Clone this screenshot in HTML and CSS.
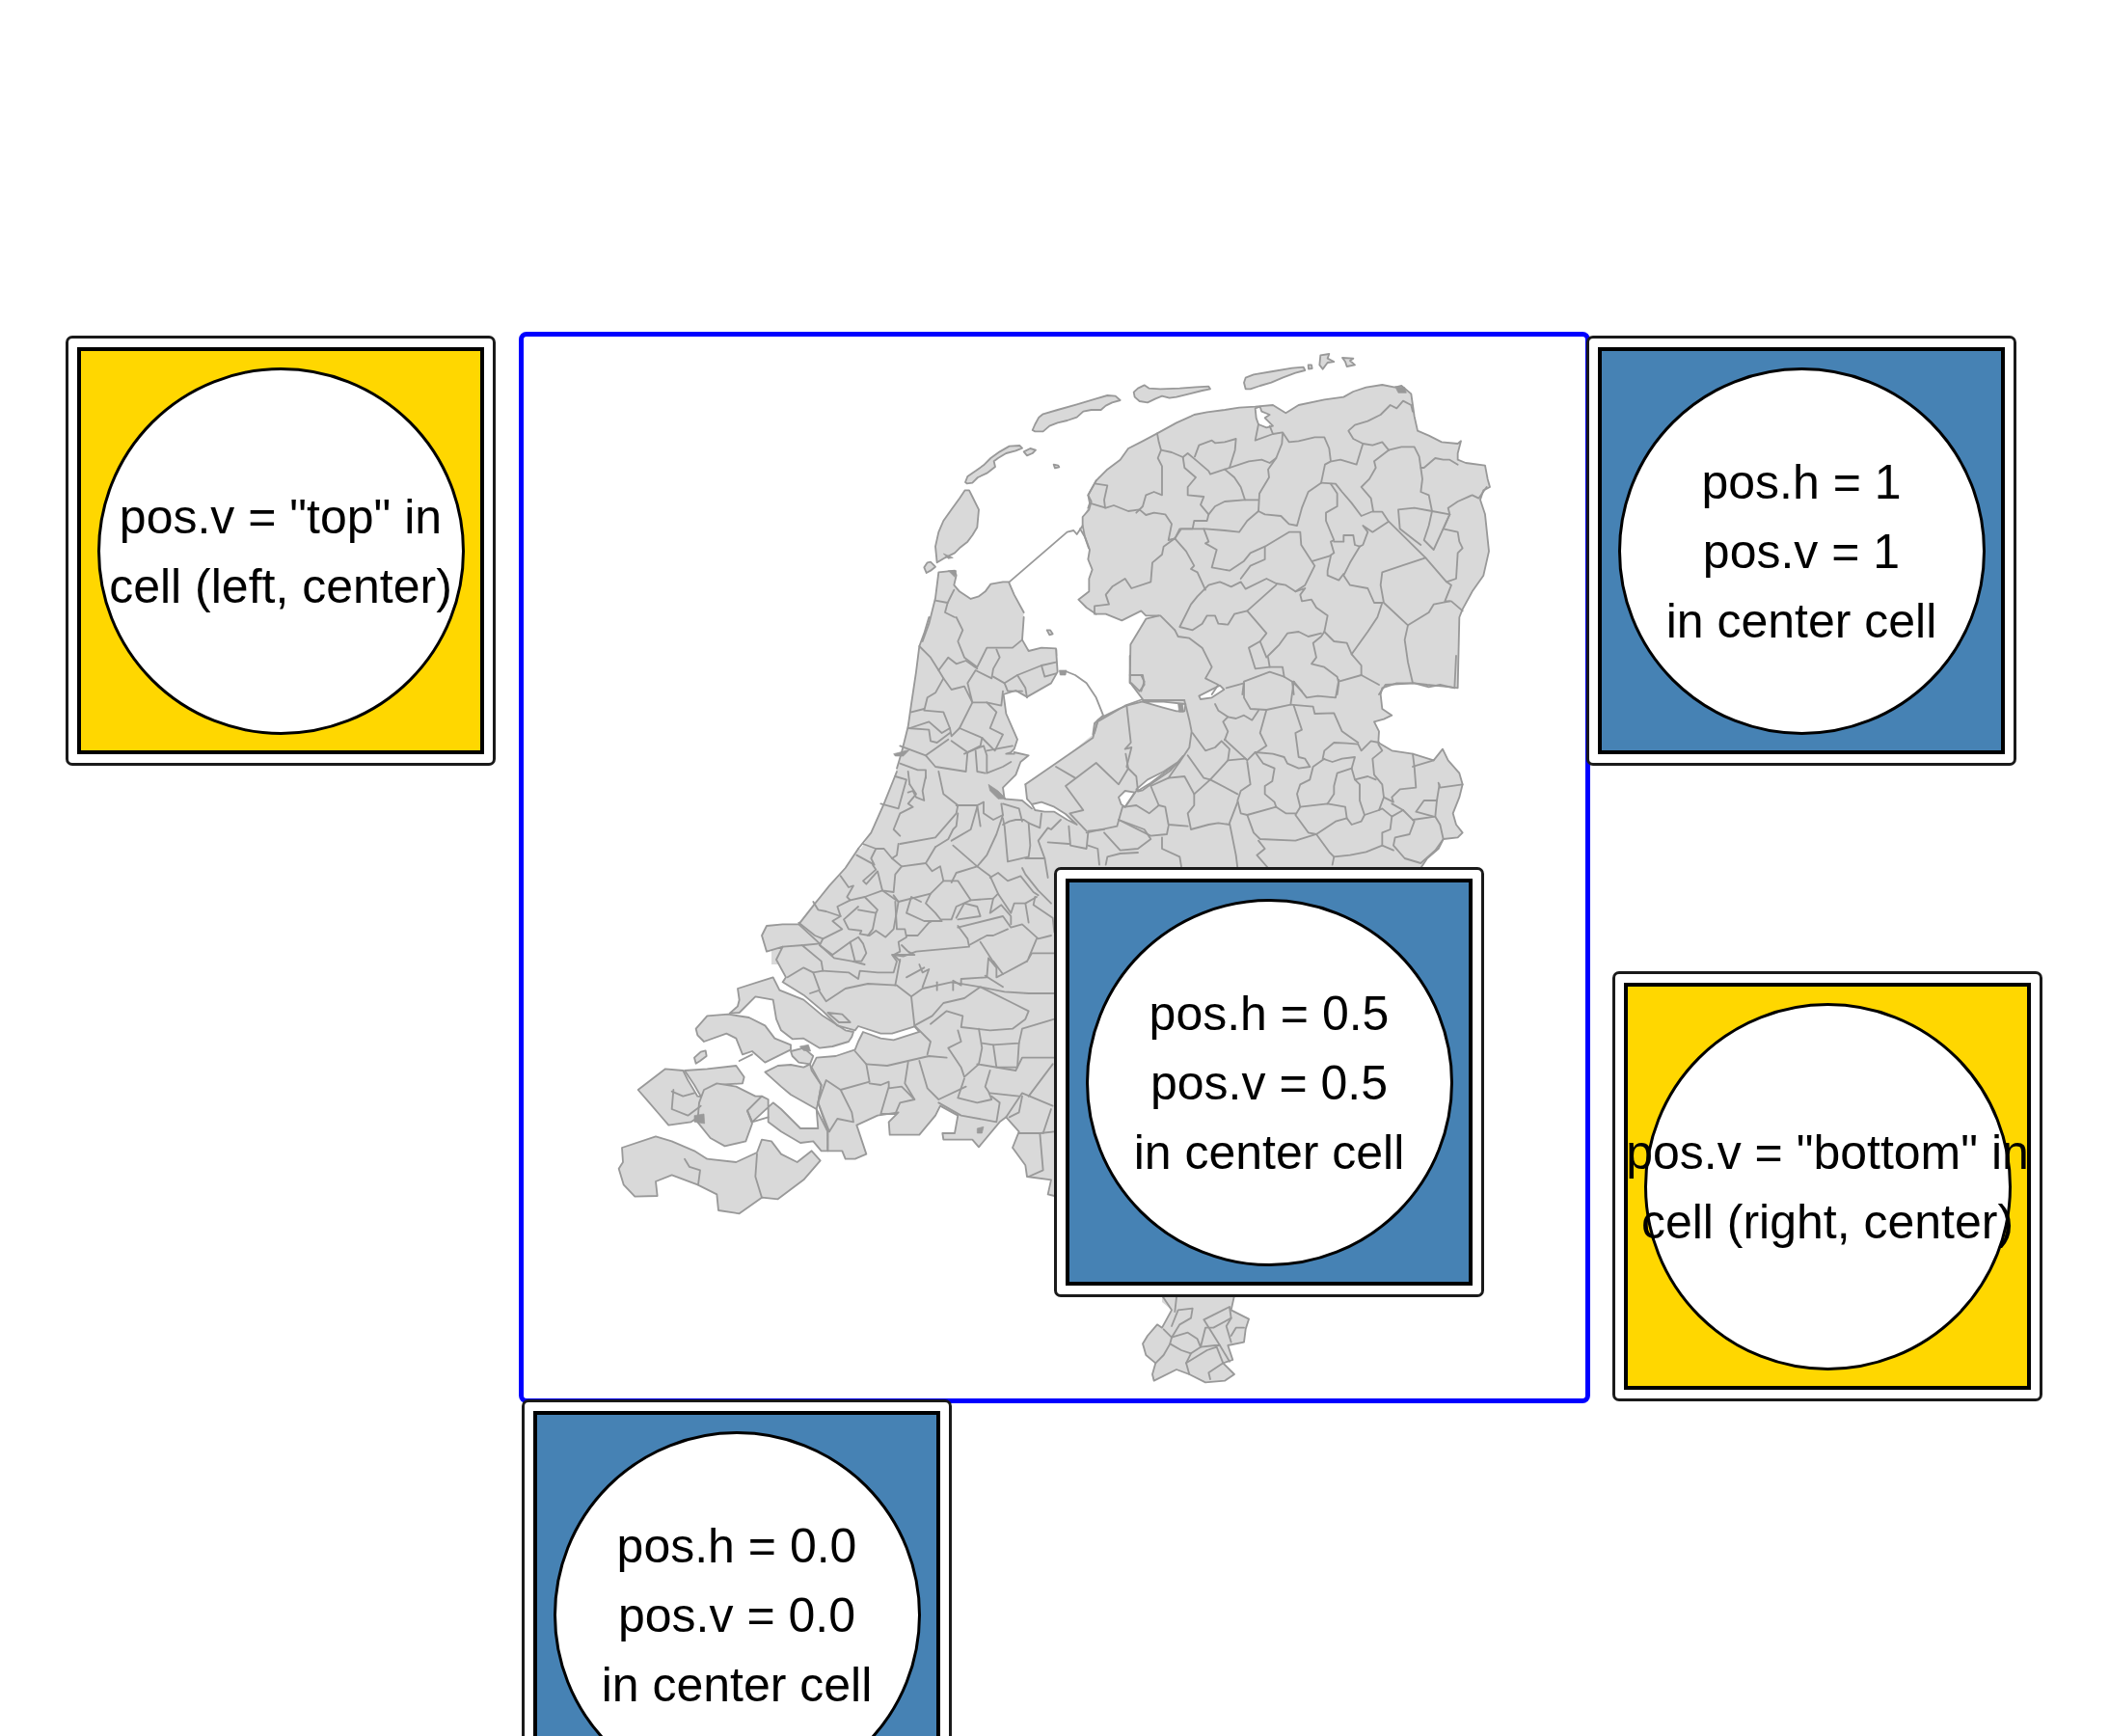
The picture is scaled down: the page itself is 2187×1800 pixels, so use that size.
FILE: index.html
```html
<!DOCTYPE html>
<html lang="en">
<head>
<meta charset="utf-8">
<title>Inset positions</title>
<link rel="stylesheet" href="styles.css">
</head>
<body>
<div class="canvas">
  <div class="frame">
    <svg class="map" viewBox="543 349 1101 1101" xmlns="http://www.w3.org/2000/svg">
      <!-- land fills -->
      <g class="land">
        <g transform="translate(940 360) scale(.33333)">
          <polygon points="100,700 150,695 155,710 148,740 165,760 200,783 225,775 245,760 262,737 300,730 318,730 335,770 365,825 362,915 375,935 395,952 415,938 470,940 470,960 38,960 50,915 70,860 90,780"/>
          <polygon points="548,555 555,590 570,630 565,660 578,692 568,720 568,760 535,785 560,810 590,830 600,830 600,400 590,415 565,460 575,480 568,505 548,528"/>
        </g>
        <g transform="translate(1120 370) scale(.33333)">
          <polygon points="10,500 30,455 25,430 50,385 85,350 125,320 150,285 195,262 240,238 300,205 345,185 355,180 395,172 450,165 495,158 545,155 600,150 640,175 680,150 760,133 820,125 850,108 890,95 940,87 980,95 1000,90 1030,115 1035,150 1040,185 1050,230 1085,245 1125,265 1175,270 1185,262 1175,300 1175,320 1200,330 1260,338 1268,380 1275,405 1255,415 1245,445 1260,490 1272,605 1255,680 1220,730 1190,785 1180,810 1175,1030 1130,1025 1080,1020 1040,1015 950,1020 930,1050 200,1050 190,1045 155,1015 157,895 205,815 245,805 205,805 190,790 130,820 80,800 50,800 20,780 -5,755 28,730 28,690 38,662 25,630 30,600 15,560 8,525"/>
        </g>
        <g transform="translate(1090 680) scale(.33333)">
          <polygon points="245,0 1260,0 1255,100 1210,90 1175,97 1130,85 1075,85 1030,100 1025,120 1030,165 1060,185 1035,197 1005,205 1020,235 1018,270 1060,295 1125,305 1190,325 1218,290 1235,325 1270,365 1280,400 1270,440 1250,490 1260,525 1280,550 1265,565 1220,570 1205,600 1170,630 1150,660 0,660 0,350 130,245 135,210 230,155 285,140 245,82"/>
        </g>
        <g transform="translate(920 640) scale(.33333)">
          <polygon points="130,0 425,0 420,70 440,105 480,95 525,97 530,170 510,205 435,248 400,228 362,240 370,300 405,380 395,410 385,420 370,425 395,425 395,420 440,430 415,450 400,490 360,530 365,565 420,570 450,595 490,605 540,612 590,650 625,670 720,645 700,900 0,900 0,570 30,470 45,420 65,340 75,270 90,170 100,90 115,50"/>
          <polygon points="430,520 640,375 655,320 670,310 720,285 745,275 795,262 920,290 945,350 925,425 880,480 780,525 730,600 715,645 630,670 590,640 560,620 490,580 450,580 435,565"/>
        </g>
        <g transform="translate(800 800) scale(.33333)">
          <polygon points="390,0 740,0 720,55 725,85 760,90 810,115 900,130 900,600 0,600 0,480 30,475 70,490 135,405 215,325 265,260 310,190 350,100"/>
        </g>
        <g transform="translate(620 880) scale(.33333)">
          <polygon points="810,0 1420,0 1420,1080 1400,1075 1410,1030 1335,1020 1330,985 1290,930 1310,880 1270,835 1250,850 1185,928 1165,905 1075,905 1072,885 1110,885 1120,830 1065,800 1050,830 1000,890 908,890 905,850 935,820 870,830 805,860 835,950 800,965 770,965 760,940 715,940 715,880 685,790 695,735 665,680 680,650 740,645 800,625 810,600 825,570 880,590 920,595 1000,570 985,553 915,575 880,575 810,552 800,565 745,550 700,505 640,455 575,415 585,400 555,345 575,305 525,320 510,270 525,240 575,235 625,235 680,165 720,115 770,60"/>
        </g>
        <g transform="translate(1170 1335) scale(.33333)">
          <polygon points="105,25 330,25 320,70 375,98 365,130 360,170 310,180 325,225 295,235 330,270 300,290 240,295 190,270 150,255 80,290 75,270 85,235 55,210 45,175 60,150 90,115 105,125 135,70 105,45"/>
        </g>
      </g>

      <!-- lakes and river arms on the land fill -->
      <g class="water">
        <g transform="translate(1090 680) scale(.33333)">
          <polygon points="285,143 345,160 390,172 415,172 418,150 350,143"/>
          <polygon points="460,125 525,92 538,105 500,130 465,135"/>
          <polygon points="265,415 300,385 350,360 395,330 410,312 370,358 320,392 285,418 270,422"/>
          <polygon points="210,440 230,420 260,425 230,470 218,462"/>
        </g>
        <g transform="translate(920 640) scale(.33333)">
          <polygon points="450,582 480,575 520,590 555,612 590,645 560,630 520,605 490,605 460,600"/>
        </g>
        <g transform="translate(1120 370) scale(.33333)">
          <polygon points="545,160 560,155 565,170 590,180 575,190 600,215 580,220 555,210 548,190"/>
        </g>
      </g>

      <!-- islands -->
      <g class="isle">
        <g transform="translate(940 360) scale(.33333)">
          <polygon points="183,420 190,402 215,385 240,367 262,345 290,325 320,308 352,306 360,314 340,322 310,330 285,345 272,355 276,372 250,392 222,405 205,422 188,424"/>
          <polygon points="392,258 400,240 412,218 425,208 470,195 530,178 590,160 625,150 650,152 665,165 640,172 620,182 605,195 575,195 550,200 530,218 500,228 470,235 445,245 425,262 400,262"/>
          <polygon points="365,325 385,315 402,320 392,330 375,337"/>
          <polygon points="458,365 472,368 475,373 462,376"/>
          <polygon points="707,140 720,128 740,118 755,128 790,130 850,128 900,124 940,122 945,130 920,135 880,145 840,155 818,158 795,152 775,160 750,172 725,168 710,155"/>
          <polygon points="95,670 90,620 100,575 115,540 140,505 165,470 182,445 195,445 205,465 225,505 220,560 205,585 190,605 165,625 150,640 120,655"/>
          <polygon points="55,685 65,670 75,668 90,683 75,695 62,702"/>
          <polygon points="437,880 447,880 455,892 445,895"/>
        </g>
        <g transform="translate(1120 370) scale(.33333)">
          <polygon points="510,80 515,65 540,55 600,45 660,35 695,32 700,42 670,50 630,65 595,80 560,90 530,100 515,100"/>
          <polygon points="748,-5 775,-9 770,5 790,15 770,18 755,38 745,25"/>
          <polygon points="816,3 850,5 840,12 855,25 830,30 825,15"/>
          <polygon points="710,25 720,25 722,36 711,38"/>
        </g>
        <g transform="translate(620 880) scale(.33333)">
          <polygon points="435,435 545,400 565,440 640,470 700,520 770,565 795,570 790,585 780,600 730,615 690,620 640,590 605,592 570,565 555,530 545,470 490,460 440,510 410,512 435,490 440,470"/>
          <polygon points="305,560 340,520 405,515 470,525 520,550 550,590 600,610 600,625 520,665 480,630 450,640 430,590 400,575 330,600 310,580"/>
          <polygon points="600,630 640,620 670,645 660,670 625,665 605,645"/>
          <polygon points="520,695 560,675 600,672 640,680 660,670 665,690 695,735 685,790 680,810 600,765 570,740"/>
          <polygon points="270,690 340,685 430,675 455,710 450,730 370,735 320,770 300,735"/>
          <polygon points="125,750 210,685 265,690 280,720 310,770 345,775 320,790 320,830 290,850 220,860 190,825 160,790"/>
          <polygon points="315,790 330,750 370,730 430,740 490,770 510,770 465,815 480,855 460,910 395,925 350,900 310,850"/>
          <polygon points="465,815 510,770 530,780 530,850 570,880 630,915 670,910 695,940 715,940 715,880 680,810 685,870 630,870 570,810 545,790 480,850"/>
          <polygon points="75,930 180,895 230,910 300,940 340,965 430,975 495,945 510,905 540,910 570,950 620,975 665,940 692,970 640,1030 560,1090 510,1085 440,1135 375,1125 370,1075 310,1045 230,1015 180,1035 185,1080 115,1082 80,1045 65,995 78,975"/>
          <polygon points="715,510 760,515 785,540 750,540"/>
          <polygon points="300,650 320,632 335,628 338,645 318,660 305,668"/>
        </g>
      </g>

      <!-- coasts and municipal borders -->
      <g class="edges">
        <g transform="translate(940 360) scale(.33333)">
          <polyline points="50,915 70,860 90,780 100,700 150,695 155,710 148,740 165,760 200,783 225,775 245,760 262,737 300,730 318,730 335,770 365,825"/>
          <polyline points="320,730 500,575 520,570 530,582 548,555 555,590 570,630 565,660 578,692 568,720 568,760 535,785 560,810 590,830"/>
          <polyline points="548,555 548,528 568,505 575,480 565,460 590,415"/>
          <polyline points="540,565 555,590 567,625"/>
          <polyline points="90,788 128,795 120,825 150,840"/>
          <polyline points="128,795 148,755"/>
        </g>
        <g transform="translate(1120 370) scale(.33333)">
          <polyline points="25,470 30,455 25,430 50,385 85,350 125,320 150,285 195,262 240,238 300,205 345,185 355,180 395,172 450,165 495,158 545,155 600,150 640,175 680,150 760,133 820,125 850,108 890,95 940,87 980,95 1000,90 1030,115 1035,150 1040,185 1050,230 1085,245 1125,265 1175,270 1185,262 1175,300 1175,320 1200,330 1260,338 1268,380 1275,405 1255,415 1245,445 1260,490 1272,605 1255,680 1220,730 1190,785 1180,810 1175,1030 1130,1025 1080,1020 1040,1015 950,1020 930,1050"/>
          <polyline points="50,800 80,800 130,820 190,790 205,805 250,805 295,850"/>
          <polyline points="155,1015 157,895 205,815 245,805"/>
          <polyline points="240,238 245,265 252,290 242,315 255,340 255,410 255,430 230,420 205,430 195,465 175,485"/>
          <polyline points="252,290 285,297 320,312 325,345 360,375 335,405 335,430 385,435 375,460 400,490 395,510 355,510 350,535 310,535 295,565"/>
          <polyline points="320,312 335,300 365,325 400,355 405,365 450,350 480,375 500,405 513,445"/>
          <polyline points="357,310 370,275 410,260 420,268 450,265 485,255 482,290 465,345"/>
          <polyline points="450,350 525,325 565,320 590,330 610,315"/>
          <polyline points="630,240 628,270 610,315 585,350 588,375 558,425 555,480"/>
          <polyline points="555,445 510,445 450,450 420,465 400,490"/>
          <polyline points="555,480 575,490 625,495 650,520 675,525 690,470 710,420 750,392"/>
          <polyline points="750,392 762,335 780,325 775,285 760,250 730,250 680,262 650,265 630,235 600,240 590,215"/>
          <polyline points="600,240 545,260 555,210"/>
          <polyline points="782,325 810,320 860,335 880,270 910,275 940,265 960,290"/>
          <polyline points="880,270 850,255 835,230 855,212 895,200 935,180 965,150 985,160 1005,137 1030,150 1035,170"/>
          <polyline points="960,290 1000,280 1040,280 1055,310 1060,345 1070,345 1105,315 1130,320 1150,320 1175,335"/>
          <polyline points="1060,345 1065,380 1060,420 1085,430 1095,480 1150,490 1130,535"/>
          <polyline points="960,290 915,325 920,345 900,380 875,405 905,440 912,480 875,495 845,455 815,420 795,395 750,392"/>
          <polyline points="912,482 940,482 960,512 1075,625 1140,700 1155,710 1135,760 1155,760 1190,790"/>
          <polyline points="960,512 910,545 880,525 895,545 880,585 870,590 840,640 820,680 840,710 895,720 915,765 940,765"/>
          <polyline points="1095,480 1040,470 990,475 995,535 1040,570 1060,585"/>
          <polyline points="1095,480 1085,525 1070,570 1100,600 1150,490"/>
          <polyline points="1150,490 1145,470 1175,450 1220,430 1240,440 1265,405"/>
          <polyline points="1130,535 1175,545 1180,575 1190,595 1175,610 1170,690 1140,700"/>
          <polyline points="1075,625 1000,650 940,670 935,710 945,765 1020,835 1085,795 1100,770 1150,760"/>
          <polyline points="1020,835 1010,880 1020,950 1035,1015"/>
          <polyline points="940,765 925,810 895,855 845,925 875,960 875,990"/>
          <polyline points="845,925 830,890 790,885 760,855 750,870 725,890 735,935 720,955 760,965 800,995 805,1015 800,1050"/>
          <polyline points="875,990 805,1010"/>
          <polyline points="875,990 930,1020"/>
          <polyline points="760,855 770,805 735,780 720,755 690,760 685,740 700,720 670,730 640,710 610,705 580,690 515,722 500,700 470,715 435,700 400,710 365,745 345,770 310,840 350,850 380,830 395,805 420,805 430,830 460,833 480,800 520,790 610,710"/>
          <polyline points="520,790 580,860 560,885 525,905 545,970 590,965 630,965 635,995"/>
          <polyline points="560,885 580,935 600,915 620,895 645,860 680,855 710,870 750,860"/>
          <polyline points="590,965 585,935"/>
          <polyline points="295,565 330,605 355,650 345,660 365,670 390,725"/>
          <polyline points="295,565 260,590 255,615 225,640 220,700 160,720 140,690 100,715 80,740 90,770 45,775 45,800"/>
          <polyline points="295,565 275,570 285,520 265,490 230,485 205,492 185,475 150,480 105,462 80,470 30,455"/>
          <polyline points="50,395 85,400 75,445 78,470"/>
          <polyline points="295,565 315,535 390,535 450,540 495,545 520,510 555,480"/>
          <polyline points="385,535 400,575 390,580 425,600 410,655 465,665 510,635 530,610 575,590 650,545 685,545 688,585 730,650 700,710 670,730"/>
          <polyline points="575,590 575,630 530,650 500,690"/>
          <polyline points="725,635 775,620 790,610 780,575 790,570 765,510 765,485 800,465 800,425 780,395"/>
          <polyline points="780,620 770,665 770,680 805,695 820,675"/>
          <polyline points="790,575 820,575 820,555 850,555 855,585 870,590"/>
          <polyline points="295,850 305,870 340,875 380,905 410,965 390,1000 430,1020 410,1050"/>
          <polyline points="155,990 190,990 200,1010 190,1040"/>
          <polyline points="635,995 590,980 510,1010 505,1050"/>
          <polyline points="635,995 660,1010 690,1040"/>
          <polyline points="660,1010 665,1050"/>
        </g>
        <g transform="translate(1090 680) scale(.33333)">
          <polyline points="1260,0 1255,100 1210,90 1175,97 1130,85 1075,85 1030,100 1025,120 1030,165 1060,185 1035,197 1005,205 1020,235 1018,270 1060,295 1125,305 1190,325 1218,290 1235,325 1270,365 1280,400 1270,440 1250,490 1260,525 1280,550 1265,565 1220,570 1205,600 1170,630 1150,660"/>
          <polyline points="245,0 245,82 285,135 230,155 145,205 135,240"/>
          <polyline points="45,48 75,60 110,85 140,130 162,185 135,210 130,245"/>
          <polyline points="285,138 415,138"/>
          <polyline points="415,140 430,200 437,235 430,285 400,330 350,365 310,395 270,420 265,375 235,345 250,285 230,290 248,270 235,155"/>
          <polyline points="232,305 240,350 210,400 140,333 45,405 100,480 58,490 110,545"/>
          <polyline points="15,345 75,380"/>
          <polyline points="265,420 230,470 222,470 205,530 110,550"/>
          <polyline points="1020,270 995,265 965,295 955,275 920,272 880,270 850,295 845,320 875,330 905,320 945,315 935,350 890,365 880,405 880,430 860,460"/>
          <polyline points="1018,275 1030,295 1000,320 1005,370 1030,400 1035,440 1020,480 975,495 960,450 960,400 945,385 935,350"/>
          <polyline points="945,385 985,375 1010,385"/>
          <polyline points="1125,305 1130,345 1135,410 1085,415 1060,440 1065,455 1035,440"/>
          <polyline points="1190,325 1125,345"/>
          <polyline points="1280,400 1210,410 1205,395"/>
          <polyline points="1208,400 1200,450 1195,500 1125,510"/>
          <polyline points="1200,450 1160,450 1135,485 1190,500"/>
          <polyline points="1060,460 1095,480 1130,515 1115,555 1070,565 1065,590 1100,630 1150,645 1195,605 1220,570 1210,525 1195,500"/>
          <polyline points="1095,480 1060,500 1030,475 1020,480"/>
          <polyline points="1060,500 1055,540 1030,550 1030,590 1065,605"/>
          <polyline points="1030,590 980,610 930,620 880,625 875,650"/>
          <polyline points="825,555 865,610 880,625"/>
          <polyline points="825,555 885,515 920,505 935,525 965,515 975,495"/>
          <polyline points="825,555 800,550 760,495 775,470 860,460 915,470 920,505"/>
          <polyline points="775,470 765,430 775,400 805,385 815,345 850,320"/>
          <polyline points="805,345 770,350 735,335 725,315 690,305 635,300 610,325 605,320"/>
          <polyline points="635,300 660,335 695,350 688,390 665,405 665,430 695,455 700,470"/>
          <polyline points="700,470 730,490 760,490"/>
          <polyline points="700,470 610,495 590,490 580,450 590,420 620,400 610,330"/>
          <polyline points="610,495 630,550 650,570 760,575 825,555"/>
          <polyline points="645,575 665,600 640,620 675,660"/>
          <polyline points="580,455 555,520 575,620 580,660"/>
          <polyline points="580,430 495,385 550,325 605,320"/>
          <polyline points="495,385 445,430 415,375 365,380 400,330"/>
          <polyline points="425,310 475,380 495,385"/>
          <polyline points="445,430 445,465 425,490 435,540 490,525 520,520 555,525"/>
          <polyline points="365,380 310,405 335,465 305,490 265,465 230,470"/>
          <polyline points="335,465 355,470 365,525 425,530"/>
          <polyline points="440,240 480,295 510,285 530,265 555,290 550,325"/>
          <polyline points="540,260 605,320"/>
          <polyline points="510,150 520,170 550,190 535,205 550,235 540,262"/>
          <polyline points="600,85 600,130 620,165 670,168 745,152 755,80"/>
          <polyline points="545,100 600,85"/>
          <polyline points="745,152 815,158 820,180 880,178 905,235 955,270"/>
          <polyline points="755,155 780,230 760,240 770,315 790,320 805,345"/>
          <polyline points="670,168 650,240 670,280 640,300"/>
          <polyline points="550,190 575,195 600,185 625,200 645,170"/>
          <polyline points="755,80 795,130 830,125 885,130 895,75"/>
          <polyline points="210,510 310,560 360,555 365,530"/>
          <polyline points="165,550 215,605 270,600 310,570 290,540 210,510"/>
          <polyline points="115,545 165,540"/>
          <polyline points="115,550 110,600 60,590 55,530"/>
          <polyline points="115,590 145,600 150,650"/>
          <polyline points="170,650 175,625 215,615 270,612"/>
          <polyline points="345,565 345,600 400,625 405,655"/>
        </g>
        <g transform="translate(920 640) scale(.33333)">
          <polyline points="30,470 45,420 65,340 75,270 90,170 100,90 115,50 130,0"/>
          <polyline points="425,0 420,70 440,105 480,95 525,97 530,170 510,205 435,248 400,228 362,240 370,300 405,380 395,410 385,420 370,425 395,425 395,420 440,430 415,450 400,490 360,530 365,565 420,570 450,595"/>
          <polyline points="430,520 640,375 655,320 670,310 720,285 745,275 795,262"/>
          <polyline points="430,520 435,565 450,582"/>
          <polyline points="100,90 135,125 160,165 190,125 215,145 245,135 280,160"/>
          <polyline points="215,0 235,40 220,75 240,125 280,155 310,95 390,95 420,70"/>
          <polyline points="160,165 175,190 150,235 125,250 115,290 175,295 195,345 170,360 130,325 70,345"/>
          <polyline points="175,190 200,225 240,215 265,265 250,205 275,165 325,190 330,160 350,125 340,100"/>
          <polyline points="330,185 365,205 405,180 430,220 435,250"/>
          <polyline points="405,180 480,150 490,185 525,175"/>
          <polyline points="480,150 525,140"/>
          <polyline points="365,205 375,230 420,230"/>
          <polyline points="360,230 355,275 310,265 265,265 225,345 200,370 195,345"/>
          <polyline points="310,265 340,295 320,345 360,365 335,415 295,375 225,345"/>
          <polyline points="295,375 290,400 250,420 200,385"/>
          <polyline points="250,420 245,480 150,465 120,430 190,380"/>
          <polyline points="120,430 40,400"/>
          <polyline points="65,345 130,350 135,385 155,390 195,360"/>
          <polyline points="75,295 115,285"/>
          <polyline points="40,455 95,475 120,475 120,500"/>
          <polyline points="240,425 275,410 300,400 310,430 310,485 360,465 385,450"/>
          <polyline points="275,415 280,480 305,485"/>
          <polyline points="310,415 390,400"/>
          <polyline points="500,700 565,705"/>
          <polyline points="760,180 795,180 800,210 785,230 760,205"/>
        </g>
        <g transform="translate(800 800) scale(.33333)">
          <polyline points="390,0 350,100 310,190 270,240"/>
          <polyline points="340,100 395,115 420,25 385,15"/>
          <polyline points="430,40 450,70 425,100 440,110 400,130 380,180 400,200"/>
          <polyline points="425,0 430,40"/>
          <polyline points="480,15 470,60 475,90 450,80 440,60 425,65"/>
          <polyline points="520,0 535,70 580,105 575,130 510,205 400,225"/>
          <polyline points="575,105 640,105 660,95"/>
          <polyline points="580,130 575,170 565,180 550,210 510,235"/>
          <polyline points="640,110 620,180 560,215"/>
          <polyline points="395,225 390,260 375,270 350,240 325,240 285,225"/>
          <polyline points="325,240 310,270 320,290 265,260"/>
          <polyline points="375,270 405,295 480,285 510,235"/>
          <polyline points="480,285 500,310 525,295 535,340 495,380 395,405 380,385"/>
          <polyline points="405,295 385,320 380,375 345,370 330,310 295,350 285,340 325,305 315,290"/>
          <polyline points="215,325 240,360 255,355 235,390 245,400 205,420 215,450 170,435 145,430 130,405"/>
          <polyline points="245,400 290,390 345,370 395,405 380,490 355,515 325,495 305,510 275,505 280,495 240,490 225,460 270,420"/>
          <polyline points="325,440 330,430 290,390"/>
          <polyline points="270,430 325,440 315,490 300,510"/>
          <polyline points="85,470 135,510 160,520 220,490 190,465 215,450"/>
          <polyline points="160,520 150,540 190,570 245,530 270,515 285,535 295,565 280,590 255,590"/>
          <polyline points="245,530 260,590"/>
          <polyline points="150,540 195,580 250,590 290,600"/>
          <polyline points="385,405 390,490 415,490 420,515 395,530 400,560 380,570 400,590"/>
          <polyline points="420,510 455,510 490,470 500,465"/>
          <polyline points="495,380 480,410 510,440 530,465 475,465 420,440 435,390 465,405"/>
          <polyline points="530,460 560,460 575,420 620,400 580,340 535,340"/>
          <polyline points="620,400 690,395 705,380 680,325 640,295 575,315 560,345"/>
          <polyline points="640,295 565,230"/>
          <polyline points="640,295 670,260 700,195 720,135 715,100"/>
          <polyline points="680,330 705,315 735,340 775,325 815,375 830,385"/>
          <polyline points="705,380 745,440 755,410 790,410 825,390"/>
          <polyline points="690,395 680,440 715,415 745,450 745,475"/>
          <polyline points="580,485 720,450 745,485 780,475 830,520 870,510"/>
          <polyline points="580,480 610,520 615,545 450,560 410,575 380,570"/>
          <polyline points="615,540 670,510 690,510 735,490"/>
          <polyline points="575,455 600,410 640,420 650,450 580,460"/>
          <polyline points="650,530 695,600"/>
          <polyline points="800,580 825,520"/>
          <polyline points="790,410 800,470"/>
          <polyline points="820,390 815,415 875,455 880,500"/>
          <polyline points="720,145 725,170 735,280 800,265 805,230 800,160 785,150 760,150 740,155 720,165"/>
          <polyline points="790,270 850,270 860,330"/>
          <polyline points="780,300 790,320 830,370 870,410"/>
          <polyline points="850,270 830,215 860,175 870,180 900,150"/>
          <polyline points="800,160 835,175 840,130"/>
          <polyline points="720,100 770,115 780,155"/>
          <polyline points="660,95 660,130 690,150 720,135"/>
          <polyline points="640,105 650,170"/>
        </g>
        <g transform="translate(620 880) scale(.33333)">
          <polyline points="810,0 770,60 720,115 680,165 625,235 575,235 525,240 510,270 525,320 575,305 555,345 585,400 575,415 640,455 700,505 745,550 800,565 810,552 880,575 915,575 985,553 1000,570 920,595 880,590 825,570 810,600 800,625 740,645 680,650 665,680 695,735 685,790 715,880 715,940 760,940 770,965 800,965 835,950 805,860 870,830 935,820 905,850 908,890 1000,890 1050,830 1065,800 1120,830 1110,885 1072,885 1075,905 1165,905 1185,928 1250,850 1270,835 1310,880 1290,930 1330,985 1335,1020 1410,1030 1400,1075 1420,1080"/>
          <polyline points="625,235 690,295 640,300 575,305"/>
          <polyline points="635,300 695,350 700,380 670,385 690,440 660,450"/>
          <polyline points="590,400 640,370 670,385"/>
          <polyline points="700,380 780,385 810,405 815,380 870,385 920,385 930,350 915,330 985,330 965,320 945,300"/>
          <polyline points="690,445 710,475 770,435 840,420 930,425 975,460 1010,435 1100,415 1190,430 1265,445 1340,450 1420,450"/>
          <polyline points="975,460 985,550 1035,600 1025,640"/>
          <polyline points="985,550 1040,520 1075,480 1140,465 1190,430 1290,480 1340,505 1330,530 1290,560 1220,565 1130,555 1135,520 1085,505 1035,545"/>
          <polyline points="1120,565 1130,600 1090,620 1130,680 1140,710 1185,670 1195,620 1185,560"/>
          <polyline points="1195,605 1230,610 1310,605 1320,560 1420,530"/>
          <polyline points="1230,610 1240,680 1305,680 1310,605"/>
          <polyline points="1180,670 1300,690 1320,650 1420,650"/>
          <polyline points="1140,715 1120,775 1180,790 1225,780 1215,755 1205,740 1220,690"/>
          <polyline points="800,630 835,670 845,725 755,750 710,720 685,790 720,880"/>
          <polyline points="835,670 900,675 965,660 1030,645 1085,650"/>
          <polyline points="965,665 955,730 985,780"/>
          <polyline points="1000,660 1025,745 1060,780 1145,740"/>
          <polyline points="845,730 880,735 905,725 905,745 945,740 985,780 940,790 925,825 880,825 905,740"/>
          <polyline points="755,750 790,820 795,850 745,840 720,880"/>
          <polyline points="1060,790 1130,830 1240,850 1250,790 1225,770"/>
          <polyline points="1270,835 1320,760 1415,800"/>
          <polyline points="1320,770 1310,820 1280,835"/>
          <polyline points="1310,885 1375,885 1420,880"/>
          <polyline points="1375,885 1385,1000 1340,1020"/>
          <polyline points="1340,770 1415,670"/>
          <polyline points="1220,760 1310,770"/>
          <polyline points="1385,885 1410,810"/>
          <polyline points="1230,350 1260,390 1335,350"/>
          <polyline points="1000,360 1010,385 1030,375 1010,430"/>
          <polyline points="940,345 925,425"/>
          <polyline points="1260,390 1240,400 1240,370 1215,340 1210,400 1130,405 1130,425 1105,410 1105,440"/>
          <polyline points="1055,415 1055,440"/>
          <polyline points="960,400 1015,370"/>
          <polyline points="1205,395 1260,430"/>
          <polyline points="1335,350 1350,325 1420,325"/>
          <polyline points="440,660 480,640"/>
          <polyline points="235,750 230,810 280,830 320,800"/>
          <polyline points="230,755 265,770 300,760"/>
          <polyline points="465,815 480,850 530,835"/>
          <polyline points="270,965 285,990 318,1000 312,1045"/>
          <polyline points="495,950 490,1020 510,1085"/>
        </g>
        <g transform="translate(1170 1335) scale(.33333)">
          <polyline points="105,25 135,70 105,125 90,115 60,150 45,175 55,210 85,235 75,270 80,290 150,255 190,270 240,295 300,290 330,270 295,235 325,225 310,180 360,170 365,130 375,98 320,70 330,25"/>
          <polyline points="135,120 155,70 200,65 195,95 160,115 135,155 110,130"/>
          <polyline points="135,155 185,140 215,160 225,185 240,125 265,125 320,95 315,60 265,85 235,100 285,180 315,230"/>
          <polyline points="135,155 130,175 165,195 195,205 225,185 270,180 285,180"/>
          <polyline points="130,175 110,210 85,235"/>
          <polyline points="195,205 180,235 190,270"/>
          <polyline points="180,235 245,195 275,185 295,235 250,265 255,285"/>
          <polyline points="320,95 305,120 320,170"/>
          <polyline points="360,125 335,125 320,150"/>
          <polyline points="150,30 145,75"/>
        </g>
      </g>

      <!-- dense urban clusters drawn solid -->
      <g class="blob">
        <g transform="translate(920 640) scale(.33333)">
          <polygon points="315,520 345,540 370,565 345,565 320,540"/>
          <polygon points="20,425 70,412 50,432 25,432"/>
          <polygon points="535,165 558,165 555,180 538,180"/>
          <polygon points="905,270 920,270 922,295 908,295"/>
        </g>
        <g transform="translate(1120 370) scale(.33333)">
          <polygon points="980,92 1010,95 1015,112 990,112"/>
        </g>
        <g transform="translate(940 360) scale(.33333)">
          <polygon points="130,695 155,695 150,715"/>
          <polygon points="115,642 145,655 130,658"/>
        </g>
        <g transform="translate(620 880) scale(.33333)">
          <polygon points="628,615 655,610 662,630 640,628"/>
          <polygon points="1180,870 1200,865 1195,885 1180,885"/>
          <polygon points="300,830 330,825 332,855 300,850"/>
        </g>
      </g>
    </svg>
  </div>

  <div class="inset at-left">
    <div class="panel gold">
      <div class="disc"></div>
      <p class="label">pos.v = "top" in<br>cell (left, center)</p>
    </div>
  </div>
  <div class="inset at-top-right">
    <div class="panel steel">
      <div class="disc"></div>
      <p class="label">pos.h = 1<br>pos.v = 1<br>in center cell</p>
    </div>
  </div>
  <div class="inset at-center">
    <div class="panel steel">
      <div class="disc"></div>
      <p class="label">pos.h = 0.5<br>pos.v = 0.5<br>in center cell</p>
    </div>
  </div>
  <div class="inset at-right">
    <div class="panel gold">
      <div class="disc"></div>
      <p class="label">pos.v = "bottom" in<br>cell (right, center)</p>
    </div>
  </div>
  <div class="inset at-bottom">
    <div class="panel steel">
      <div class="disc"></div>
      <p class="label">pos.h = 0.0<br>pos.v = 0.0<br>in center cell</p>
    </div>
  </div>
</div>
</body>
</html>
```
FILE: styles.css
```css
html, body {
  margin: 0;
  padding: 0;
  background: #fff;
}

.canvas {
  position: relative;
  width: 2187px;
  height: 1800px;
  overflow: hidden;
  font-family: "Liberation Sans", Arial, sans-serif;
  color: #000;
}

.frame {
  position: absolute;
  left: 538px;
  top: 344px;
  width: 1111px;
  height: 1111px;
  box-sizing: border-box;
  border: 5px solid #00f;
  border-radius: 8px;
}

.map {
  display: block;
  width: 100%;
  height: 100%;
}

.land { fill: #d9d9d9; }

.water,
.isle {
  stroke: #999;
  stroke-width: 5.5;
  stroke-linejoin: round;
}

.water { fill: #fff; }
.isle { fill: #d9d9d9; }

.edges {
  fill: none;
  stroke: #999;
  stroke-width: 5.5;
  stroke-linejoin: round;
  stroke-linecap: round;
}

.blob {
  fill: #999;
  stroke: #999;
  stroke-width: 2;
}

.inset {
  position: absolute;
  width: 446px;
  height: 446px;
  box-sizing: border-box;
  padding: 9px;
  background: #fff;
  border: 3px solid #1a1a1a;
  border-radius: 7px;
}

.at-left { left: 68px; top: 348px; }
.at-top-right { left: 1645px; top: 348px; }
.at-center { left: 1093px; top: 899px; }
.at-right { left: 1672px; top: 1007px; }
.at-bottom { left: 541px; top: 1451px; }

.panel {
  position: relative;
  height: 100%;
  box-sizing: border-box;
  border: 4px solid #000;
  display: flex;
  align-items: center;
  justify-content: center;
}

.gold { background: #ffd700; }
.steel { background: #4682b4; }

.disc {
  width: 381px;
  height: 381px;
  flex: none;
  box-sizing: border-box;
  background: #fff;
  border: 3px solid #000;
  border-radius: 50%;
}

.label {
  position: absolute;
  left: 50%;
  top: 50%;
  margin: 1px 0 0;
  transform: translate(-50%, -50%);
  white-space: nowrap;
  text-align: center;
  font-size: 50px;
  line-height: 72px;
}
```
